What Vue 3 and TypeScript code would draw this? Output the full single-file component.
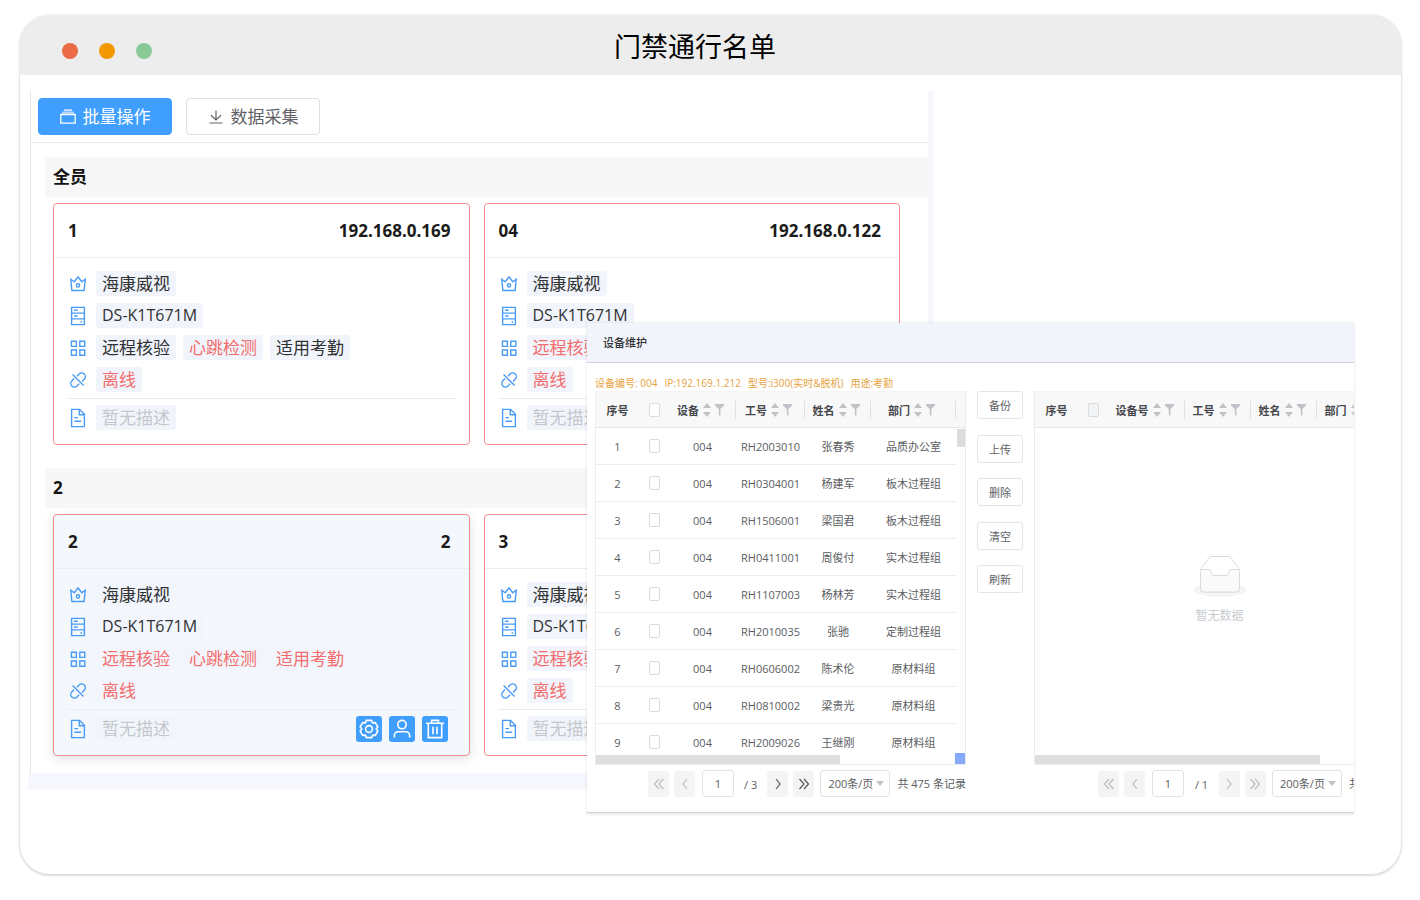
<script setup lang="ts">
import { ref } from 'vue'

type Tone = 'normal' | 'alert'
interface Feature { label: string; tone: Tone }
interface Device { name: string; ip: string; features: Feature[]; active?: boolean }
interface Group { title: string; devices: Device[] }
interface Person { no: string; name: string; dept: string }
interface Column { key: string; label: string; width: number }
interface Pane { key: string; columns: Column[]; people: Person[]; pages: number; total: number }

const features = (a: Tone, b: Tone, c: Tone): Feature[] => [
  { label: '远程核验', tone: a },
  { label: '心跳检测', tone: b },
  { label: '适用考勤', tone: c },
]

const groups: Group[] = [
  {
    title: '全员',
    devices: [
      { name: '1', ip: '192.168.0.169', features: features('normal', 'alert', 'normal') },
      { name: '04', ip: '192.168.0.122', features: features('alert', 'alert', 'alert') },
    ],
  },
  {
    title: '2',
    devices: [
      { name: '2', ip: '2', features: features('alert', 'alert', 'alert'), active: true },
      { name: '3', ip: '3', features: features('alert', 'alert', 'alert') },
    ],
  },
]

const panes: Pane[] = [
  {
    key: 'local',
    columns: [
      { key: 'device', label: '设备', width: 67 },
      { key: 'no', label: '工号', width: 69 },
      { key: 'name', label: '姓名', width: 66 },
      { key: 'dept', label: '部门', width: 85 },
    ],
    people: [
      { no: 'RH2003010', name: '张春秀', dept: '品质办公室' },
      { no: 'RH0304001', name: '杨建军', dept: '板木过程组' },
      { no: 'RH1506001', name: '梁国君', dept: '板木过程组' },
      { no: 'RH0411001', name: '周俊付', dept: '实木过程组' },
      { no: 'RH1107003', name: '杨林芳', dept: '实木过程组' },
      { no: 'RH2010035', name: '张驰', dept: '定制过程组' },
      { no: 'RH0606002', name: '陈术伦', dept: '原材料组' },
      { no: 'RH0810002', name: '梁贵光', dept: '原材料组' },
      { no: 'RH2009026', name: '王继刚', dept: '原材料组' },
    ],
    pages: 3,
    total: 475,
  },
  {
    key: 'remote',
    columns: [
      { key: 'device', label: '设备号', width: 77 },
      { key: 'no', label: '工号', width: 66 },
      { key: 'name', label: '姓名', width: 66 },
      { key: 'dept', label: '部门', width: 66 },
    ],
    people: [],
    pages: 1,
    total: 0,
  },
]

const operations = ['备份', '上传', '删除', '清空', '刷新']
const pageNo = ref<Record<string, string>>({ local: '1', remote: '1' })
</script>

<template>
  <div class="page">
    <main class="window">
      <header class="titlebar">
        <div class="dots"><i class="dot red"></i><i class="dot amber"></i><i class="dot green"></i></div>
        <h1>门禁通行名单</h1>
      </header>

      <section class="devices">
        <div class="devices-inner">
          <div class="toolbar">
            <button type="button" class="btn primary">
              <svg width="16" height="16" viewBox="0 0 16 16" fill="none" stroke="currentColor" stroke-width="1.3">
                <path d="M2.6 2.6h10.8l1.8 3H.8z" fill="currentColor" fill-opacity=".6" stroke="none" />
                <path d="M.8 5.6h14.400v8.600H.8zM4 1.2h8" />
              </svg>
              <span>批量操作</span>
            </button>
            <button type="button" class="btn">
              <svg width="16" height="16" viewBox="0 0 16 16" fill="none" stroke="currentColor" stroke-width="1.2">
                <path d="M8 1.5v9.3M3 6.2l5 4.8 5-4.8M1.5 14h13" />
              </svg>
              <span>数据采集</span>
            </button>
          </div>

          <section v-for="group in groups" :key="group.title" class="group">
            <h2>{{ group.title }}</h2>
            <div class="cards">
              <article v-for="device in group.devices" :key="device.name" class="card" :class="{ active: device.active }">
                <header class="card-head"><span>{{ device.name }}</span><span>{{ device.ip }}</span></header>
                <div class="card-body">
                  <div class="line">
                    <svg class="ico" viewBox="0 0 16 20" width="16" height="20">
                      <path d="M.8 5.3 4.2 7.8 8 3l3.8 4.8 3.4-2.5-1.1 11.2H1.9z" /><circle cx="8" cy="11.4" r="1.6" />
                    </svg>
                    <span class="tag">海康威视</span>
                  </div>
                  <div class="line">
                    <svg class="ico" viewBox="0 0 16 20" width="16" height="20">
                      <path d="M1.6 1.4h12.8v17.2H1.6zM1.6 7.1h12.8M1.6 12.9h12.8M4 4.3h3.6M4 10h3.6M10.6 15.8h1.4" />
                    </svg>
                    <span class="tag model">DS-K1T671M</span>
                  </div>
                  <div class="line">
                    <svg class="ico" viewBox="0 0 16 20" width="16" height="20">
                      <path d="M1.4 3.2h5v5.2h-5zM9.8 3.2h5v5.2h-5zM1.4 12h5v5.2h-5zM9.8 12h5v5.2h-5z" />
                    </svg>
                    <span v-for="item in device.features" :key="item.label" class="tag" :class="item.tone">{{ item.label }}</span>
                  </div>
                  <div class="line">
                    <svg class="ico" viewBox="0 0 16 20" width="16" height="20">
                      <path d="M6.9 6.3 9.1 4a3.6 3.6 0 0 1 5.2 5.1l-2.2 2.3M9.2 13.6 7 16a3.6 3.6 0 0 1-5.2-5.1l2.2-2.3M2.6 4.6l11 11" />
                    </svg>
                    <span class="tag alert">离线</span>
                  </div>
                  <div class="line foot">
                    <svg class="ico" viewBox="0 0 16 20" width="16" height="20">
                      <path d="M1.6 1.4h8l4.8 4.8v12.4H1.6zM9.2 1.8v5h4.8M4.4 9.6H8M4.4 13.2h6.8" />
                    </svg>
                    <span class="tag muted">暂无描述</span>
                    <div v-if="device.active" class="actions">
                      <button type="button" aria-label="设置">
                        <svg viewBox="0 0 20 20" width="20" height="20">
                          <path d="M7.4 1.4h5.2l1 2.500 2.700-.3 2.500 4.300L17.200 10l1.600 2.100-2.500 4.300-2.700-.3-1 2.500H7.400l-1-2.500-2.700.3-2.500-4.300L2.800 10 1.200 7.900l2.500-4.300 2.700.3z" />
                          <circle cx="10" cy="10" r="3.400" />
                        </svg>
                      </button>
                      <button type="button" aria-label="人员">
                        <svg viewBox="0 0 20 20" width="20" height="20">
                          <circle cx="10" cy="5.6" r="4.2" /><path d="M2.4 18.6v-2.2a3.6 3.6 0 0 1 3.6-3.6h8a3.6 3.6 0 0 1 3.6 3.6v2.2" />
                        </svg>
                      </button>
                      <button type="button" aria-label="删除">
                        <svg viewBox="0 0 20 20" width="20" height="20">
                          <path d="M1 4.2h18M3.3 4.2v14.4h13.4V4.2M6.6 4V1.4h6.8V4M8 7.8v7.4M12 7.8v7.4" />
                        </svg>
                      </button>
                    </div>
                  </div>
                </div>
              </article>
            </div>
          </section>
        </div>
      </section>

      <section class="dialog" role="dialog" aria-labelledby="dialog-title">
        <header id="dialog-title" class="dialog-head">设备维护</header>
        <div class="dialog-body">
          <p class="summary">
            <span>设备编号: 004</span><span>IP:192.169.1.212</span><span>型号:i300(实时&amp;脱机)</span><span>用途:考勤</span>
          </p>
          <div class="panes">
            <template v-for="(pane, index) in panes" :key="pane.key">
              <div v-if="index === 1" class="operations">
                <button v-for="op in operations" :key="op" type="button">{{ op }}</button>
              </div>
              <div class="pane" :class="pane.key">
                <div class="grid">
                  <table>
                    <colgroup>
                      <col class="c-index" /><col class="c-check" />
                      <col v-for="col in pane.columns" :key="col.key" :style="{ width: col.width + 'px' }" />
                      <col />
                    </colgroup>
                    <thead>
                      <tr>
                        <th>序号</th>
                        <th><input type="checkbox" aria-label="全选" :disabled="!pane.people.length" /></th>
                        <th v-for="col in pane.columns" :key="col.key">
                          <div class="th">
                            <span>{{ col.label }}</span>
                            <svg width="8" height="14" viewBox="0 0 8 14"><path d="M4 0l4 5H0zM4 14l4-5H0z" /></svg>
                            <svg width="9" height="12" viewBox="0 0 9 12"><path d="M0 0h9v1.5L5.4 5v7L3.800 10.800V5L0 1.5z" /></svg>
                          </div>
                        </th>
                        <th></th>
                      </tr>
                    </thead>
                    <tbody>
                      <tr v-for="(person, i) in pane.people" :key="person.no">
                        <td>{{ i + 1 }}</td>
                        <td><input type="checkbox" :aria-label="person.name" /></td>
                        <td>004</td>
                        <td>{{ person.no }}</td>
                        <td>{{ person.name }}</td>
                        <td>{{ person.dept }}</td>
                      </tr>
                    </tbody>
                  </table>
                  <div v-if="!pane.people.length" class="empty">
                    <svg width="54" height="43" viewBox="0 0 54 43">
                      <ellipse cx="27" cy="35" rx="26.5" ry="7" fill="#f5f5f5" />
                      <path d="M7.5 14.5 17 1.5h20l9.5 13V34a3 3 0 0 1-3 3h-33a3 3 0 0 1-3-3z" fill="#fff" stroke="#dcdcdc" />
                      <path d="M7.5 14.5H16q2 0 2.4 3t2.6 3h12q2.2 0 2.6-3t2.4-3h8.5V34a3 3 0 0 1-3 3h-33a3 3 0 0 1-3-3z" fill="#fafafa" stroke="#dcdcdc" />
                    </svg>
                    <span>暂无数据</span>
                  </div>
                  <i v-if="pane.people.length" class="bar-y"></i>
                  <i class="bar-x"></i>
                  <i v-if="pane.people.length" class="corner"></i>
                </div>
                <nav class="pager" aria-label="分页">
                  <button type="button" disabled aria-label="首页"><svg viewBox="0 0 12 12" width="12" height="12"><path d="M6 1 1.5 6 6 11M10.5 1 6 6l4.5 5" /></svg></button>
                  <button type="button" disabled aria-label="上一页"><svg viewBox="0 0 12 12" width="12" height="12"><path d="M8 1 4 6l4 5" /></svg></button>
                  <input v-model="pageNo[pane.key]" type="text" aria-label="页码" />
                  <span class="count">/ {{ pane.pages }}</span>
                  <button type="button" :disabled="pane.pages < 2" aria-label="下一页"><svg viewBox="0 0 12 12" width="12" height="12"><path d="M4 1l4 5-4 5" /></svg></button>
                  <button type="button" :disabled="pane.pages < 2" aria-label="末页"><svg viewBox="0 0 12 12" width="12" height="12"><path d="M1.5 1 6 6l-4.5 5M6 1l4.5 5L6 11" /></svg></button>
                  <span class="size">
                    <select aria-label="每页条数"><option>200条/页</option></select>
                    <svg width="8" height="5" viewBox="0 0 8 5"><path d="M0 0h8L4 5z" /></svg>
                  </span>
                  <span class="total">共 {{ pane.total }} 条记录</span>
                </nav>
              </div>
            </template>
          </div>
        </div>
      </section>
    </main>
  </div>
</template>

<style>
body { background: #fff; }
</style>

<style scoped>
* { box-sizing: border-box; }
button, input, select { font: inherit; margin: 0; padding: 0; }
.page {
  display: flex;
  min-height: 100vh;
  padding: 15px 19px 26px 20px;
  font-family: "Open Sans", "Noto Sans", "Noto Sans CJK SC", sans-serif;
  font-size: 17px;
  color: #303133;
}
.window {
  position: relative;
  flex: 1;
  min-width: 0;
  border-radius: 30px;
  background: #fff;
  box-shadow: 0 1px 2px 1px rgba(0, 0, 0, 0.14);
}
.titlebar {
  display: flex;
  align-items: center;
  height: 60px;
  margin: 0 -1px;
  padding: 0 164px 0 43px;
  border-radius: 30px 30px 0 0;
  background: #ededed;
}
.dots { display: flex; gap: 21px; padding-top: 12px; }
.dot { width: 16px; height: 16px; border-radius: 50%; }
.red { background: #ea6b46; }
.amber { background: #f39800; }
.green { background: #89c997; }
h1 { flex: 1; margin: 0; padding-top: 4px; text-align: center; font-size: 27px; line-height: 60px; font-weight: 400; color: #000; }

.devices {
  max-width: 906px;
  margin: 16px 0 0 8px;
  padding-left: 2px;
  border-right: 6px solid #f6f7fd;
  border-bottom: 17px solid #f6f8fd;
}
.devices-inner { border-left: 1px solid #e6e6e9; }
.toolbar { display: flex; gap: 14px; padding: 7px; border-bottom: 1px solid #e9e9eb; }
.btn {
  display: flex;
  align-items: center;
  justify-content: center;
  gap: 7px;
  width: 134px;
  height: 37px;
  border: 1px solid #dcdfe6;
  border-radius: 4px;
  background: #fff;
  color: #606266;
  line-height: 24px;
}
.primary { border-color: #409eff; background: #409eff; color: #fff; }
.group { margin: 14px 0 0 14px; padding-bottom: 7px; }
.group + .group { margin-top: 16px; padding-bottom: 17px; }
h2 { margin: 0; padding: 0 8px; background: #f7f7f7; font-size: 17px; line-height: 40px; font-weight: 700; color: #111; }
.cards { display: grid; grid-template-columns: 1fr 1fr; gap: 14px; padding: 6px 28px 0 8px; }
.card { border: 1px solid #f08f8f; border-radius: 4px; background: #fff; }
.active { background: #f4f8fd; box-shadow: 0 3px 12px rgba(0, 0, 0, 0.12); }
.card-head {
  display: flex;
  justify-content: space-between;
  padding: 0 18px 0 14px;
  border-bottom: 1px solid #ebeef2;
  font-weight: 700;
  line-height: 53px;
  color: #1b1b1b;
}
.card-body { display: flex; flex-direction: column; gap: 7px; padding: 13px 13px 14px; }
.line { display: flex; align-items: center; gap: 7px; height: 25px; padding-left: 3px; }
.ico { margin-right: 3px; fill: none; stroke: #4a9bf5; stroke-width: 1.4; }
.tag { padding: 0 6px; border-radius: 3px; background: #f1f5fb; line-height: 25px; white-space: nowrap; }
.model { font-size: 16px; }
.active .tag { background: #f2f6fc; }
.alert { color: #f26d6d; }
.muted { color: #c4c7cc; }
.foot { height: 32px; margin-top: -1px; padding-top: 6px; border-top: 1px solid #e9ecf1; }
.actions { display: flex; gap: 7px; margin-left: auto; padding-right: 8px; }
.actions button { display: grid; place-items: center; width: 26px; height: 26px; border: 0; border-radius: 3px; background: #409eff; }
.actions svg { fill: none; stroke: #fff; stroke-width: 1.6; }

.dialog {
  position: absolute;
  top: 308px;
  right: 47px;
  width: 767px;
  border-bottom: 1px solid #d4d4d6;
  background: #fff;
  box-shadow: 0 0 2px 1px rgba(0, 0, 0, 0.06), 0 3px 2px rgba(0, 0, 0, 0.04);
  font-size: 11px;
  color: #5b5d61;
}
.dialog-head { padding: 0 16px; border-bottom: 1px solid #ccd1db; background: #f1f4fb; font-weight: 500; line-height: 39px; color: #303133; }
.dialog-body { padding: 12px 0 14px 8px; overflow: hidden; }
.summary { display: flex; gap: 7px; margin: 0; font-size: 10px; line-height: 16px; white-space: nowrap; color: #e6a23c; }
.panes { display: flex; gap: 11px; }
.pane { flex: none; width: 371px; }
.operations { display: flex; flex: none; flex-direction: column; justify-content: space-between; width: 46px; height: 202px; }
.operations button { height: 28px; border: 1px solid #e4e5e9; border-radius: 3px; background: #fff; color: #606266; }
.grid { position: relative; height: 374px; overflow: hidden; border: 1px solid #ebecef; border-top-color: #f4f4f6; }
table { width: 100%; table-layout: fixed; border-collapse: separate; border-spacing: 0; }
.c-index { width: 43px; }
.c-check { width: 30px; }
th, td { height: 37px; padding: 0; text-align: center; white-space: nowrap; border-bottom: 1px solid #eceef1; }
th { height: 36px; background: #f8f8f9; font-weight: 700; color: #45474b; border-bottom-color: #e4e5e8; }
tbody tr:last-child td { border-bottom-color: transparent; }
.th { display: flex; align-items: center; justify-content: center; gap: 4px; height: 18px; padding-right: 3px; border-right: 1px solid #dfe0e4; }
.th svg { fill: #c0c2c8; }
input[type="checkbox"] {
  appearance: none;
  display: block;
  width: 11px;
  height: 14px;
  margin: 0 auto;
  border: 1px solid #d9dbe1;
  border-radius: 2px;
  background: #fff;
}
input[type="checkbox"]:disabled { background: #f3f4f6; }
.bar-y { position: absolute; top: 37px; right: 0; width: 8px; height: 18px; background: #dcdcdc; }
.bar-x { position: absolute; bottom: 0; left: 0; width: 244px; height: 9px; background: #dedede; }
.remote .bar-x { width: 285px; }
.corner { position: absolute; right: 0; bottom: 0; width: 10px; height: 11px; background: #84a9f8; }
.empty { display: flex; flex-direction: column; align-items: center; gap: 8px; padding-top: 127px; font-size: 12px; line-height: 20px; color: #c8cbd1; }
.pager { display: flex; align-items: center; gap: 5px; padding: 4px 0 0 53px; line-height: 26px; white-space: nowrap; }
.remote .pager { padding-left: 64px; }
.pager button { display: grid; flex: none; place-items: center; width: 21px; height: 26px; border: 0; border-radius: 3px; background: #f4f4f5; }
.pager button svg { fill: none; stroke: #55575b; stroke-width: 1.2; }
.pager button:disabled svg { stroke: #bbbdc1; }
.pager input { flex: none; width: 32px; height: 27px; margin-left: 2px; border: 1px solid #e0e2e8; border-radius: 3px; text-align: center; color: inherit; background: #fff; }
.count { width: 27px; padding-top: 3px; text-align: center; }
.size { position: relative; flex: none; width: 70px; height: 27px; margin-left: 1px; }
.size select { appearance: none; width: 100%; height: 27px; padding-left: 7px; border: 1px solid #e0e2e8; border-radius: 3px; background: #fff; color: inherit; }
.size svg { position: absolute; top: 11px; right: 6px; fill: #c0c2c8; pointer-events: none; }
.total { padding-left: 2px; }
</style>
